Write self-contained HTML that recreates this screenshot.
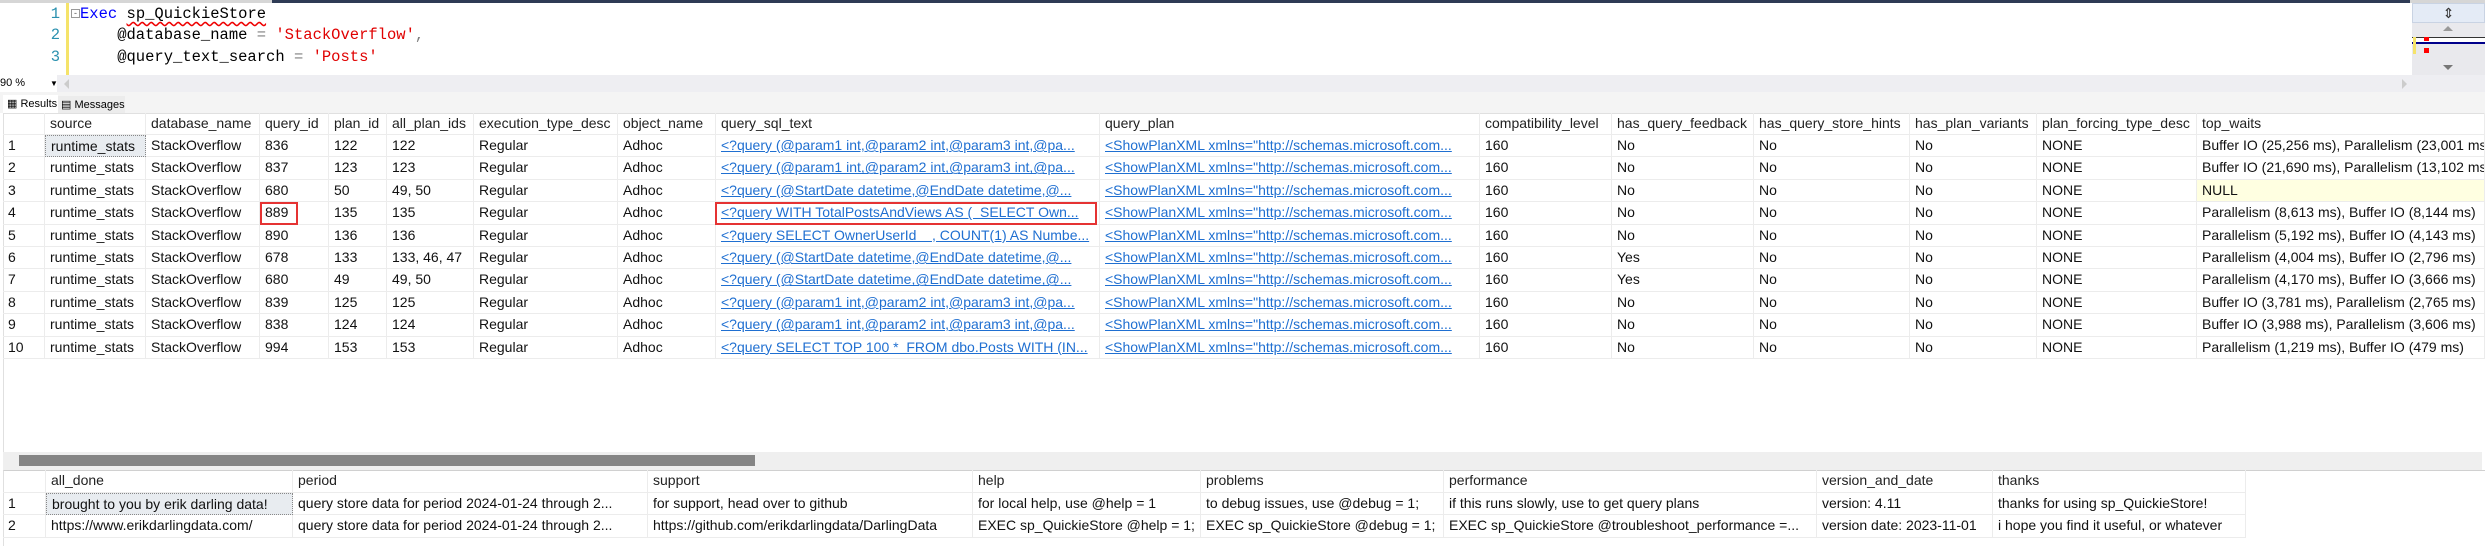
<!DOCTYPE html>
<html><head><meta charset="utf-8"><style>
*{box-sizing:border-box;margin:0;padding:0}
body{width:2485px;height:546px;overflow:hidden;background:#fff;position:relative;font-family:"Liberation Sans",sans-serif}
.abs{position:absolute}
.code{font-family:"Liberation Mono",monospace;font-size:15.5px;white-space:pre;position:absolute;left:80px;line-height:21px}
.ln{position:absolute;left:30px;width:30px;text-align:right;font-family:"Liberation Mono",monospace;font-size:15.5px;color:#2b91af;line-height:21px}
.row{position:absolute;left:3px;display:flex;height:22.4px}
.row div{flex:none;border-right:1px solid #ececec;border-bottom:1px solid #ececec;padding-left:5px;font-size:14px;line-height:21px;white-space:nowrap;overflow:hidden;color:#111}
.row.h div{color:#222}
a{color:#1f6fd1;text-decoration:underline}
.kw{color:#0000ff}.str{color:#e00000}.gr{color:#808080}
</style></head><body>
<div class="abs" style="left:0;top:0;width:2485px;height:3px;background:#d6d6d6"></div>
<div class="abs" style="left:272px;top:0;width:2138px;height:3px;background:#2f3b55"></div>
<div class="abs" style="left:66px;top:3px;width:3px;height:72px;background:#f5e36a"></div>
<div class="abs" style="left:71px;top:9px;width:9px;height:9px;border:1px solid #999;font-size:9px;line-height:6px;text-align:center;color:#555">-</div>
<div class="ln" style="top:4px">1</div>
<div class="ln" style="top:25px">2</div>
<div class="ln" style="top:47px">3</div>
<div class="code" style="top:4px"><span class="kw">Exec</span> <span style="text-decoration:underline wavy #e00;text-underline-offset:3px">sp_QuickieStore</span></div>
<div class="code" style="top:25px">    @database_name <span class="gr">=</span> <span class="str">'StackOverflow'</span><span class="gr">,</span></div>
<div class="code" style="top:47px">    @query_text_search <span class="gr">=</span> <span class="str">'Posts'</span></div>
<div class="abs" style="left:2412px;top:3px;width:73px;height:72px;background:#e9e9ed"></div>
<div class="abs" style="left:2412px;top:3px;width:73px;height:20px;background:#e4ebf6;border:1px solid #c9d3e3;text-align:center;font-size:14px;line-height:18px;color:#333">&#8661;</div>
<div class="abs" style="left:2443px;top:26px;width:0;height:0;border-left:5px solid transparent;border-right:5px solid transparent;border-bottom:5px solid #999"></div>
<div class="abs" style="left:2412px;top:37px;width:73px;height:7px;background:#fff;border-top:1px solid #333;border-bottom:2px solid #00008b"></div>
<div class="abs" style="left:2413px;top:37px;width:3px;height:17px;background:#f5e36a"></div>
<div class="abs" style="left:2424px;top:37px;width:5px;height:4px;background:#f00"></div>
<div class="abs" style="left:2424px;top:48px;width:5px;height:5px;background:#f00"></div>
<div class="abs" style="left:2443px;top:65px;width:0;height:0;border-left:5px solid transparent;border-right:5px solid transparent;border-top:5px solid #777"></div>
<div class="abs" style="left:0;top:75px;width:2485px;height:17px;background:#eeeef2"></div>
<div class="abs" style="left:0;top:75px;width:57px;height:17px;background:#fff;font-size:11px;line-height:17px">90 %<span style="position:absolute;left:50px;font-size:8px">&#9660;</span></div>
<div class="abs" style="left:64px;top:79px;width:0;height:0;border-top:5px solid transparent;border-bottom:5px solid transparent;border-right:5px solid #ccc"></div>
<div class="abs" style="left:2402px;top:79px;width:0;height:0;border-top:5px solid transparent;border-bottom:5px solid transparent;border-left:5px solid #ccc"></div>
<div class="abs" style="left:0;top:92px;width:2485px;height:21px;background:#f4f4f4"></div>
<div class="abs" style="left:3px;top:95px;width:55px;height:18px;background:#fff;font-size:11px;line-height:18px;padding-left:4px">&#9638; Results</div>
<div class="abs" style="left:58px;top:96px;width:67px;height:17px;background:#ececec;font-size:11px;line-height:18px;padding-left:3px">&#9636; Messages</div>
<div class="abs" style="left:3px;top:113px;width:2482px;height:339px;background:#fff;border-left:1px solid #e0e0e0;border-top:1px solid #e0e0e0"></div>

<div class="row h" style="top:113px"><div style="width:42px"></div><div style="width:101px">source</div><div style="width:114px">database_name</div><div style="width:69px">query_id</div><div style="width:58px">plan_id</div><div style="width:87px">all_plan_ids</div><div style="width:144px">execution_type_desc</div><div style="width:98px">object_name</div><div style="width:384px">query_sql_text</div><div style="width:380px">query_plan</div><div style="width:132px">compatibility_level</div><div style="width:142px">has_query_feedback</div><div style="width:156px">has_query_store_hints</div><div style="width:127px">has_plan_variants</div><div style="width:160px">plan_forcing_type_desc</div><div style="width:288px">top_waits</div></div>

<div class="row" style="top:135px"><div style="width:42px">1</div><div style="width:101px;background:#e8ecf0;border:1px dotted #888">runtime_stats</div><div style="width:114px">StackOverflow</div><div style="width:69px">836</div><div style="width:58px">122</div><div style="width:87px">122</div><div style="width:144px">Regular</div><div style="width:98px">Adhoc</div><div style="width:384px"><a>&lt;?query (@param1 int,@param2 int,@param3 int,@pa...</a></div><div style="width:380px"><a>&lt;ShowPlanXML xmlns="http://schemas.microsoft.com...</a></div><div style="width:132px">160</div><div style="width:142px">No</div><div style="width:156px">No</div><div style="width:127px">No</div><div style="width:160px">NONE</div><div style="width:288px">Buffer IO (25,256 ms), Parallelism (23,001 ms)</div></div>

<div class="row" style="top:157.4px"><div style="width:42px">2</div><div style="width:101px">runtime_stats</div><div style="width:114px">StackOverflow</div><div style="width:69px">837</div><div style="width:58px">123</div><div style="width:87px">123</div><div style="width:144px">Regular</div><div style="width:98px">Adhoc</div><div style="width:384px"><a>&lt;?query (@param1 int,@param2 int,@param3 int,@pa...</a></div><div style="width:380px"><a>&lt;ShowPlanXML xmlns="http://schemas.microsoft.com...</a></div><div style="width:132px">160</div><div style="width:142px">No</div><div style="width:156px">No</div><div style="width:127px">No</div><div style="width:160px">NONE</div><div style="width:288px">Buffer IO (21,690 ms), Parallelism (13,102 ms)</div></div>

<div class="row" style="top:179.8px"><div style="width:42px">3</div><div style="width:101px">runtime_stats</div><div style="width:114px">StackOverflow</div><div style="width:69px">680</div><div style="width:58px">50</div><div style="width:87px">49, 50</div><div style="width:144px">Regular</div><div style="width:98px">Adhoc</div><div style="width:384px"><a>&lt;?query (@StartDate datetime,@EndDate datetime,@...</a></div><div style="width:380px"><a>&lt;ShowPlanXML xmlns="http://schemas.microsoft.com...</a></div><div style="width:132px">160</div><div style="width:142px">No</div><div style="width:156px">No</div><div style="width:127px">No</div><div style="width:160px">NONE</div><div style="width:288px;background:#ffffe1">NULL</div></div>

<div class="row" style="top:202.2px"><div style="width:42px">4</div><div style="width:101px">runtime_stats</div><div style="width:114px">StackOverflow</div><div style="width:69px">889</div><div style="width:58px">135</div><div style="width:87px">135</div><div style="width:144px">Regular</div><div style="width:98px">Adhoc</div><div style="width:384px"><a>&lt;?query WITH TotalPostsAndViews AS (&nbsp;&nbsp;SELECT Own...</a></div><div style="width:380px"><a>&lt;ShowPlanXML xmlns="http://schemas.microsoft.com...</a></div><div style="width:132px">160</div><div style="width:142px">No</div><div style="width:156px">No</div><div style="width:127px">No</div><div style="width:160px">NONE</div><div style="width:288px">Parallelism (8,613 ms), Buffer IO (8,144 ms)</div></div>

<div class="row" style="top:224.6px"><div style="width:42px">5</div><div style="width:101px">runtime_stats</div><div style="width:114px">StackOverflow</div><div style="width:69px">890</div><div style="width:58px">136</div><div style="width:87px">136</div><div style="width:144px">Regular</div><div style="width:98px">Adhoc</div><div style="width:384px"><a>&lt;?query SELECT OwnerUserId&nbsp;&nbsp;&nbsp;&nbsp;, COUNT(1) AS Numbe...</a></div><div style="width:380px"><a>&lt;ShowPlanXML xmlns="http://schemas.microsoft.com...</a></div><div style="width:132px">160</div><div style="width:142px">No</div><div style="width:156px">No</div><div style="width:127px">No</div><div style="width:160px">NONE</div><div style="width:288px">Parallelism (5,192 ms), Buffer IO (4,143 ms)</div></div>

<div class="row" style="top:247px"><div style="width:42px">6</div><div style="width:101px">runtime_stats</div><div style="width:114px">StackOverflow</div><div style="width:69px">678</div><div style="width:58px">133</div><div style="width:87px">133, 46, 47</div><div style="width:144px">Regular</div><div style="width:98px">Adhoc</div><div style="width:384px"><a>&lt;?query (@StartDate datetime,@EndDate datetime,@...</a></div><div style="width:380px"><a>&lt;ShowPlanXML xmlns="http://schemas.microsoft.com...</a></div><div style="width:132px">160</div><div style="width:142px">Yes</div><div style="width:156px">No</div><div style="width:127px">No</div><div style="width:160px">NONE</div><div style="width:288px">Parallelism (4,004 ms), Buffer IO (2,796 ms)</div></div>

<div class="row" style="top:269.4px"><div style="width:42px">7</div><div style="width:101px">runtime_stats</div><div style="width:114px">StackOverflow</div><div style="width:69px">680</div><div style="width:58px">49</div><div style="width:87px">49, 50</div><div style="width:144px">Regular</div><div style="width:98px">Adhoc</div><div style="width:384px"><a>&lt;?query (@StartDate datetime,@EndDate datetime,@...</a></div><div style="width:380px"><a>&lt;ShowPlanXML xmlns="http://schemas.microsoft.com...</a></div><div style="width:132px">160</div><div style="width:142px">Yes</div><div style="width:156px">No</div><div style="width:127px">No</div><div style="width:160px">NONE</div><div style="width:288px">Parallelism (4,170 ms), Buffer IO (3,666 ms)</div></div>

<div class="row" style="top:291.8px"><div style="width:42px">8</div><div style="width:101px">runtime_stats</div><div style="width:114px">StackOverflow</div><div style="width:69px">839</div><div style="width:58px">125</div><div style="width:87px">125</div><div style="width:144px">Regular</div><div style="width:98px">Adhoc</div><div style="width:384px"><a>&lt;?query (@param1 int,@param2 int,@param3 int,@pa...</a></div><div style="width:380px"><a>&lt;ShowPlanXML xmlns="http://schemas.microsoft.com...</a></div><div style="width:132px">160</div><div style="width:142px">No</div><div style="width:156px">No</div><div style="width:127px">No</div><div style="width:160px">NONE</div><div style="width:288px">Buffer IO (3,781 ms), Parallelism (2,765 ms)</div></div>

<div class="row" style="top:314.2px"><div style="width:42px">9</div><div style="width:101px">runtime_stats</div><div style="width:114px">StackOverflow</div><div style="width:69px">838</div><div style="width:58px">124</div><div style="width:87px">124</div><div style="width:144px">Regular</div><div style="width:98px">Adhoc</div><div style="width:384px"><a>&lt;?query (@param1 int,@param2 int,@param3 int,@pa...</a></div><div style="width:380px"><a>&lt;ShowPlanXML xmlns="http://schemas.microsoft.com...</a></div><div style="width:132px">160</div><div style="width:142px">No</div><div style="width:156px">No</div><div style="width:127px">No</div><div style="width:160px">NONE</div><div style="width:288px">Buffer IO (3,988 ms), Parallelism (3,606 ms)</div></div>

<div class="row" style="top:336.6px"><div style="width:42px">10</div><div style="width:101px">runtime_stats</div><div style="width:114px">StackOverflow</div><div style="width:69px">994</div><div style="width:58px">153</div><div style="width:87px">153</div><div style="width:144px">Regular</div><div style="width:98px">Adhoc</div><div style="width:384px"><a>&lt;?query SELECT TOP 100 *&nbsp;&nbsp;FROM dbo.Posts WITH (IN...</a></div><div style="width:380px"><a>&lt;ShowPlanXML xmlns="http://schemas.microsoft.com...</a></div><div style="width:132px">160</div><div style="width:142px">No</div><div style="width:156px">No</div><div style="width:127px">No</div><div style="width:160px">NONE</div><div style="width:288px">Parallelism (1,219 ms), Buffer IO (479 ms)</div></div>

<div class="abs" style="left:260px;top:202px;width:38px;height:23px;border:2px solid #e53333"></div>
<div class="abs" style="left:715px;top:202px;width:382px;height:23px;border:2px solid #e53333"></div>

<div class="abs" style="left:3px;top:452px;width:2479px;height:18px;background:#efefef"></div>
<div class="abs" style="left:19px;top:455px;width:736px;height:11px;background:#858585"></div>

<div class="abs" style="left:3px;top:470px;width:2482px;height:76px;background:#fff;border-left:1px solid #e0e0e0;border-top:1px solid #d0d0d0"></div>
<div class="row h" style="top:470px;height:23px"><div style="width:43px"></div><div style="width:247px">all_done</div><div style="width:355px">period</div><div style="width:325px">support</div><div style="width:228px">help</div><div style="width:243px">problems</div><div style="width:373px">performance</div><div style="width:176px">version_and_date</div><div style="width:253px">thanks</div></div>
<div class="row" style="top:493px"><div style="width:43px">1</div><div style="width:247px;background:#e8ecf0;border:1px dotted #888">brought to you by erik darling data!</div><div style="width:355px">query store data for period 2024-01-24 through 2...</div><div style="width:325px">for support, head over to github</div><div style="width:228px">for local help, use @help = 1</div><div style="width:243px">to debug issues, use @debug = 1;</div><div style="width:373px">if this runs slowly, use to get query plans</div><div style="width:176px">version: 4.11</div><div style="width:253px">thanks for using sp_QuickieStore!</div></div>
<div class="row" style="top:515.4px"><div style="width:43px">2</div><div style="width:247px">https://www.erikdarlingdata.com/</div><div style="width:355px">query store data for period 2024-01-24 through 2...</div><div style="width:325px">https://github.com/erikdarlingdata/DarlingData</div><div style="width:228px">EXEC sp_QuickieStore @help = 1;</div><div style="width:243px">EXEC sp_QuickieStore @debug = 1;</div><div style="width:373px">EXEC sp_QuickieStore @troubleshoot_performance =...</div><div style="width:176px">version date: 2023-11-01</div><div style="width:253px">i hope you find it useful, or whatever</div></div>
</body></html>
